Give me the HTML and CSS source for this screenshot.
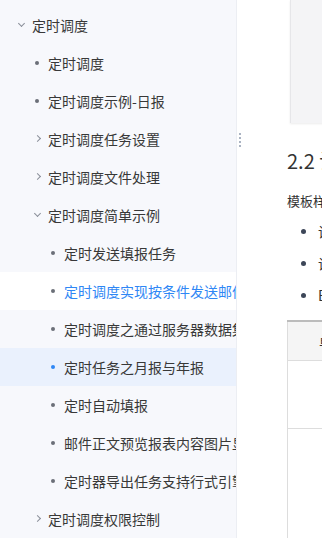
FILE: index.html
```html
<!DOCTYPE html>
<html lang="zh-CN">
<head>
  <meta charset="UTF-8">
  <title>定时调度</title>
  <link rel="stylesheet" href="styles.css">
</head>
<body>
  <div class="page">
    <nav class="sidebar">
      <div class="item lv1"><span class="arrow down"></span>定时调度</div>
      <div class="item lv2"><span class="dot"></span>定时调度</div>
      <div class="item lv2"><span class="dot"></span>定时调度示例-日报</div>
      <div class="item lv2"><span class="arrow"></span>定时调度任务设置</div>
      <div class="item lv2"><span class="arrow"></span>定时调度文件处理</div>
      <div class="item lv2"><span class="arrow down"></span>定时调度简单示例</div>
      <div class="item lv3"><span class="dot"></span>定时发送填报任务</div>
      <div class="item lv3 current"><span class="dot"></span>定时调度实现按条件发送邮件</div>
      <div class="item lv3"><span class="dot"></span>定时调度之通过服务器数据集</div>
      <div class="item lv3 hover"><span class="dot"></span>定时任务之月报与年报</div>
      <div class="item lv3"><span class="dot"></span>定时自动填报</div>
      <div class="item lv3"><span class="dot"></span>邮件正文预览报表内容图片显示</div>
      <div class="item lv3"><span class="dot"></span>定时器导出任务支持行式引擎</div>
      <div class="item lv2"><span class="arrow"></span>定时调度权限控制</div>
    </nav>

    <div class="handle"><i></i><i></i><i></i><i></i></div>

    <main class="content">
      <div class="codebox"></div>
      <h2>2.2 设置模板参数</h2>
      <p>模板样式如下图所示：</p>
      <ul>
        <li>设置参数</li>
        <li>设置条件</li>
        <li>Excel</li>
      </ul>
      <table>
        <tr><th>单元格</th></tr>
        <tr><td></td></tr>
        <tr><td class="tall"></td></tr>
      </table>
    </main>
  </div>
</body>
</html>
```

FILE: styles.css
```css
body {
  margin: 0;
  font-family: "Noto Sans CJK SC", "Noto Sans", sans-serif;
  color: #333;
  overflow: hidden;
}
.page {
  display: flex;
  height: 538px;
  position: relative;
}
.sidebar {
  width: 236px;
  flex-shrink: 0;
  background-color: #f7f8fc;
  border-right: 1px solid #eceef3;
  padding-top: 6px;
  overflow: hidden;
}
.item {
  height: 38px;
  display: flex;
  align-items: center;
  font-size: 14px;
  white-space: nowrap;
  color: #383838;
  position: relative;
}
.lv1 { padding-left: 32px; }
.lv2 { padding-left: 48px; }
.lv3 { padding-left: 64px; }
.item.current {
  background-color: #fff;
  color: #2f87f5;
  margin-right: -1px;
}
.item.hover {
  background-color: #eaf1fd;
}
.dot {
  position: absolute;
  width: 4px;
  height: 4px;
  border-radius: 50%;
  background-color: #6b6f78;
  top: 17px;
}
.lv2 .dot { left: 35px; }
.lv3 .dot { left: 51px; }
.hover .dot { background-color: #2f87f5; }
.arrow {
  position: absolute;
  top: 16px;
  width: 4px;
  height: 4px;
  border-right: 1px solid #8a8f99;
  border-bottom: 1px solid #8a8f99;
  transform: rotate(-45deg);
}
.arrow.down {
  top: 15px;
  transform: rotate(45deg);
}
.lv1 .arrow { left: 19px; }
.lv2 .arrow { left: 35px; }

.handle {
  position: absolute;
  left: 239px;
  top: 133px;
  display: flex;
  flex-direction: column;
  gap: 2px;
}
.handle i {
  display: block;
  width: 2px;
  height: 2px;
  background-color: #aab3c2;
}

.content {
  flex: 1;
  min-width: 0;
  padding-left: 50px;
  overflow: hidden;
  white-space: nowrap;
}
.codebox {
  height: 123px;
  margin-left: 3px;
  width: 400px;
  background-color: #f4f4f6;
  border-left: 1px solid #e6e6e9;
  box-shadow: 0 1px 2px rgba(0, 0, 0, 0.08);
}
h2 {
  font-size: 20px;
  font-weight: normal;
  margin: 25px 0 0;
  line-height: 26px;
  color: #333;
}
p {
  font-size: 13px;
  margin: 17px 0 0;
  line-height: 20px;
}
ul {
  margin: 4px 0 0;
  padding-left: 31px;
  font-size: 14px;
  list-style: none;
}
ul li {
  height: 32px;
  line-height: 32px;
  position: relative;
}
ul li::before {
  content: "";
  position: absolute;
  left: -17px;
  top: 14px;
  width: 5px;
  height: 5px;
  border-radius: 50%;
  background-color: #3d4658;
}
table {
  margin-top: 9px;
  border-collapse: collapse;
  width: 400px;
  border-top: 2px solid #bcbcbc;
}
th {
  height: 38px;
  background-color: #f5f5f5;
  font-weight: normal;
  font-size: 14px;
  text-align: left;
  padding: 0 0 0 31px;
  border-left: 1px solid #ddd;
  border-bottom: 1px solid #ddd;
}
td {
  height: 65px;
  border-left: 1px solid #ddd;
  border-bottom: 1px solid #ddd;
}
td.tall {
  height: 200px;
}
```
